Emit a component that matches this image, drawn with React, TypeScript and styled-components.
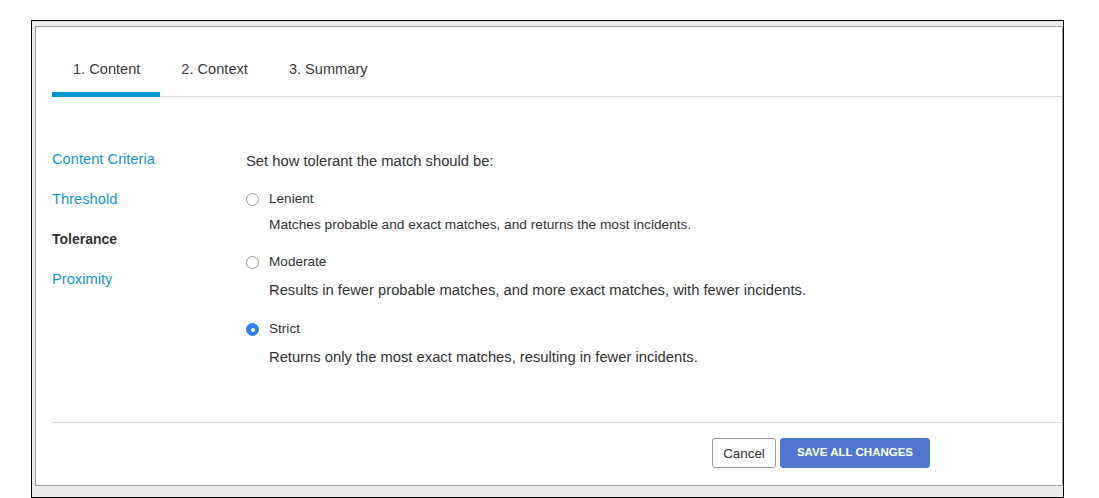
import React from 'react';
import styled, { createGlobalStyle } from 'styled-components';

const GlobalStyle = createGlobalStyle`
  body {
    margin: 0;
    background: #ffffff;
    font-family: "Liberation Sans", Arial, Helvetica, sans-serif;
    color: #333333;
  }
`;

const Frame = styled.div`
  box-sizing: border-box;
  margin: 20px 0 0 31px;
  width: 1033px;
  height: 478px;
  border: 1px solid #000000;
  background: #ebebeb;
  padding: 5px 0 11px 3px;
`;

const Panel = styled.div`
  box-sizing: border-box;
  height: 460px;
  background: #ffffff;
  border: 1px solid #a3a3a3;
  padding-left: 16px;
  display: flex;
  flex-direction: column;
`;

const TabList = styled.div`
  display: flex;
  border-bottom: 1px solid #dcdcdc;
`;

const Tab = styled.div<{ $active?: boolean }>`
  padding: 32px 20px 13px 21px;
  margin-bottom: -1px;
  font-size: 14.6px;
  line-height: 20px;
  color: #3a3a3a;
  border-bottom: 5px solid ${({ $active }) => ($active ? '#0096d6' : 'transparent')};
`;

const Body = styled.div`
  display: flex;
  height: 325px;
`;

const SideNav = styled.div`
  width: 194px;
  padding-top: 52px;
  display: flex;
  flex-direction: column;
  gap: 20px;
`;

const NavItem = styled.div<{ $current?: boolean }>`
  font-size: ${({ $current }) => ($current ? '14px' : '14.7px')};
  line-height: 20px;
  color: ${({ $current }) => ($current ? '#333333' : '#1796d3')};
  font-weight: ${({ $current }) => ($current ? 'bold' : 'normal')};
`;

const Main = styled.div`
  padding-top: 54px;
  display: flex;
  flex-direction: column;
`;

const Question = styled.div`
  font-size: 14.75px;
  line-height: 20px;
  color: #333333;
`;

const Option = styled.div`
  margin-top: 19px;
  display: flex;
  flex-direction: column;
`;

const OptionRow = styled.div`
  display: flex;
  align-items: flex-start;
`;

const Radio = styled.span<{ $checked?: boolean }>`
  box-sizing: border-box;
  width: 13px;
  height: 13px;
  margin-top: 3px;
  border-radius: 50%;
  border: 1px solid ${({ $checked }) => ($checked ? '#2f7ff2' : '#9a9a9a')};
  background: ${({ $checked }) => ($checked ? '#2f7ff2' : '#ffffff')};
  display: flex;
  align-items: center;
  justify-content: center;

  &::after {
    content: '';
    width: 4px;
    height: 4px;
    border-radius: 50%;
    background: #ffffff;
    display: ${({ $checked }) => ($checked ? 'block' : 'none')};
  }
`;

const OptionLabel = styled.span`
  margin-left: 10px;
  font-size: 13.6px;
  line-height: 18px;
  color: #333333;
`;

const Description = styled.div<{ $small?: boolean }>`
  margin: 8px 0 0 23px;
  font-size: ${({ $small }) => ($small ? '13.7px' : '14.75px')};
  line-height: ${({ $small }) => ($small ? '18px' : '22px')};
  color: #333333;
`;

const Footer = styled.div`
  border-top: 1px solid #dcdcdc;
  display: flex;
  justify-content: flex-end;
  gap: 4px;
  padding: 15px 132px 0 0;
`;

const Button = styled.button<{ $primary?: boolean }>`
  box-sizing: border-box;
  height: 30px;
  border-radius: 3px;
  font-family: "Liberation Sans", Arial, Helvetica, sans-serif;
  cursor: pointer;
  border: 1px solid ${({ $primary }) => ($primary ? '#5178cf' : '#9c9c9c')};
  background: ${({ $primary }) => ($primary ? '#5178cf' : '#ffffff')};
  color: ${({ $primary }) => ($primary ? '#ffffff' : '#333333')};
  font-size: ${({ $primary }) => ($primary ? '11.5px' : '13.4px')};
  font-weight: ${({ $primary }) => ($primary ? 'bold' : 'normal')};
  width: ${({ $primary }) => ($primary ? '150px' : '64px')};
  padding: ${({ $primary }) => ($primary ? '0 0 2px' : '0')};
`;

const tabs = ['1. Content', '2. Context', '3. Summary'];
const sections = ['Content Criteria', 'Threshold', 'Tolerance', 'Proximity'];

const options = [
  { label: 'Lenient', desc: 'Matches probable and exact matches, and returns the most incidents.', small: true },
  { label: 'Moderate', desc: 'Results in fewer probable matches, and more exact matches, with fewer incidents.' },
  { label: 'Strict', desc: 'Returns only the most exact matches, resulting in fewer incidents.', checked: true },
];

const App = () => {
  return (
    <>
      <GlobalStyle />
      <Frame>
        <Panel>
          <TabList>
            {tabs.map((t, i) => (
              <Tab key={t} $active={i === 0}>{t}</Tab>
            ))}
          </TabList>
          <Body>
            <SideNav>
              {sections.map((s) => (
                <NavItem key={s} $current={s === 'Tolerance'}>{s}</NavItem>
              ))}
            </SideNav>
            <Main>
              <Question>Set how tolerant the match should be:</Question>
              {options.map((o) => (
                <Option key={o.label}>
                  <OptionRow>
                    <Radio $checked={o.checked} />
                    <OptionLabel>{o.label}</OptionLabel>
                  </OptionRow>
                  <Description $small={o.small}>{o.desc}</Description>
                </Option>
              ))}
            </Main>
          </Body>
          <Footer>
            <Button>Cancel</Button>
            <Button $primary>SAVE ALL CHANGES</Button>
          </Footer>
        </Panel>
      </Frame>
    </>
  );
};

export default App;
